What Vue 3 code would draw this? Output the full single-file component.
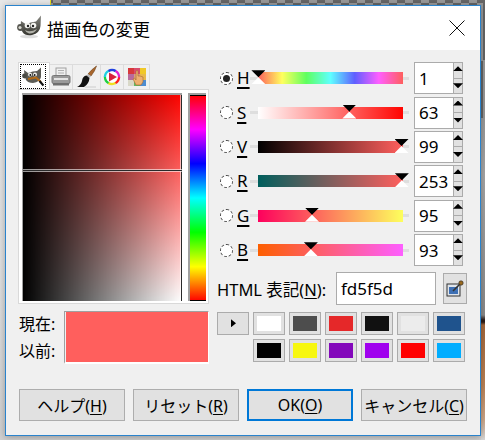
<script setup>
const sliders = [
  { key: 'H', value: 1, max: 360, checked: true, bar: '#fd5f5d, #ffff5f, #5fff5f, #5fffff, #5f5fff, #ff5fff, #ff5f5d' },
  { key: 'S', value: 63, max: 100, bar: '#fff, #ff0400' },
  { key: 'V', value: 99, max: 100, bar: '#000, #ff5f5d' },
  { key: 'R', value: 253, max: 255, bar: '#005f5d, #ff5f5d' },
  { key: 'G', value: 95, max: 255, bar: '#fd005d, #fdff5d' },
  { key: 'B', value: 93, max: 255, bar: '#fd5f00, #fd5fff' },
];

const paletteTop = ['#ffffff', '#4d4d4d', '#e52829', '#111111', '#ececec', '#1f538d'];
const paletteBottom = ['#000000', '#f7f70f', '#8307bb', '#a000ee', '#ff0000', '#00adff'];
const wheel = ['#ff2020', '#f0e020', '#20d040', '#20d0e0', '#2040e0', '#e020d0'];
</script>

<template>
  <div class="desktop">
    <div class="bg-checker-top"></div>
    <div class="bg-tick"></div>
    <div class="bg-right"></div>

    <div class="dialog">
      <header class="titlebar">
        <svg class="title-icon" viewBox="0 0 24 24" width="24" height="24">
          <defs>
            <linearGradient id="wilberHead" x1="0" y1="0" x2="0" y2="1">
              <stop offset="0" stop-color="#8a8a84" />
              <stop offset="1" stop-color="#35352f" />
            </linearGradient>
          </defs>
          <ellipse cx="12" cy="21.5" rx="9" ry="1.8" fill="#ddd" />
          <path d="M4 6 L8.5 9 Q14 7 19 6.5 L24 0.5 L23.5 11 Q23 18 15 20 Q8 21 5.5 17 Q3 13 4 6 Z" fill="url(#wilberHead)" />
          <circle cx="3.5" cy="12.5" r="3.4" fill="#55554f" />
          <circle cx="3" cy="12.5" r="1.6" fill="#d8d8d0" />
          <circle cx="10.5" cy="10.5" r="2.8" fill="#f4f4f0" />
          <circle cx="16.5" cy="10.5" r="2.8" fill="#f4f4f0" />
          <circle cx="11" cy="11" r="1.2" fill="#222" />
          <circle cx="16" cy="11" r="1.2" fill="#222" />
          <path d="M8 15 Q13 18 20 14 Q17 19 12 18.5 Q9 18 8 15 Z" fill="#b0b0a8" />
        </svg>
        <span class="title-text">描画色の変更</span>
        <svg class="close-icon" viewBox="0 0 16 16" width="16" height="16">
          <path d="M0.5 0.5 L15.5 15.5 M15.5 0.5 L0.5 15.5" stroke="#111" stroke-width="1" fill="none" />
        </svg>
      </header>

      <div class="content">
        <div class="top-area">
          <div class="left-col">
            <div class="tabs">
              <div class="tab active">
                <div class="focus-box">
                  <svg viewBox="0 0 22 20" width="22" height="20">
                    <path d="M2 3 L6 6 Q11 4 15 4 L19 0.5 L19 10 Q18 15 11 16 Q6 16 4 13 Q2 9 2 3 Z" fill="#5c5c56" />
                    <circle cx="2.5" cy="9" r="2.4" fill="#4a4a44" />
                    <circle cx="8" cy="7.5" r="2" fill="#f0f0ec" />
                    <circle cx="13" cy="7.5" r="2" fill="#f0f0ec" />
                    <circle cx="8.3" cy="8" r="0.9" fill="#111" />
                    <circle cx="12.7" cy="8" r="0.9" fill="#111" />
                    <path d="M6 12 L14 10.5 L19 15" stroke="#b46a14" stroke-width="2" fill="none" />
                    <path d="M17.5 14 L21.5 18.5" stroke="#111" stroke-width="2.2" />
                  </svg>
                </div>
              </div>
              <div class="tab w23">
                <svg viewBox="0 0 20 20" width="20" height="20">
                  <rect x="5" y="1" width="10" height="8" fill="#f0f0f0" stroke="#a0a0a0" />
                  <path d="M7 3.5 H13 M7 6 H13" stroke="#b0b0b0" />
                  <rect x="1" y="8.5" width="18" height="8" rx="1.5" fill="#9a9a9a" stroke="#777" />
                  <rect x="3" y="11" width="14" height="2" fill="#e4e4e4" />
                  <rect x="2" y="16" width="16" height="2.5" fill="#6f6f6f" />
                </svg>
              </div>
              <div class="tab w28">
                <svg viewBox="0 0 22 24" width="22" height="24">
                  <path d="M20.5 1 Q19 6 15 11 L12 9 Q16 4 20.5 1 Z" fill="#a8662c" stroke="#6d3f17" stroke-width="0.6" />
                  <path d="M15 11 L12 9 L10.5 10.5 L13.5 13 Z" fill="#b8b8b8" />
                  <path d="M10.5 10.5 Q6.5 11 6 16 Q5 20 1 22 L8 22 Q13 19 13.5 13 Z" fill="#111" />
                  <path d="M9 22 L20 22" stroke="#ccc" stroke-width="1" />
                </svg>
              </div>
              <div class="tab w23">
                <svg viewBox="0 0 18 18" width="18" height="18">
                  <circle
                    v-for="(c, i) in wheel"
                    :key="c"
                    cx="9" cy="9" r="7"
                    fill="none"
                    :stroke="c"
                    stroke-width="2.4"
                    pathLength="60"
                    stroke-dasharray="10.5 49.5"
                    :stroke-dashoffset="-i * 10"
                  />
                  <circle cx="9" cy="9" r="5.6" fill="#fff" />
                  <path d="M6 4.5 L14 9 L6 13.5 Z" fill="#d8203c" />
                </svg>
              </div>
              <div class="tab w26">
                <svg viewBox="0 0 20 20" width="20" height="20">
                  <rect x="1" y="1" width="6" height="6" fill="#d8383c" />
                  <rect x="7" y="1" width="6" height="6" fill="#d84c6c" />
                  <rect x="13" y="1" width="6" height="6" fill="#f0c828" />
                  <rect x="1" y="7" width="6" height="6" fill="#b86a9c" />
                  <rect x="7" y="7" width="6" height="6" fill="#d8a078" />
                  <rect x="13" y="7" width="6" height="6" fill="#e8b84c" />
                  <rect x="1" y="13" width="6" height="6" fill="#d8d8c8" />
                  <rect x="7" y="13" width="6" height="6" fill="#60b860" />
                  <rect x="13" y="13" width="6" height="6" fill="#4c8cd0" />
                  <path d="M9 4 Q10 3 11 4 L11 9 L13 9 L16 10 L16 15 L14 18 L9 18 L6 12 L7.5 11 L9 13 Z" fill="#eeb070" stroke="#a86a30" stroke-width="0.6" />
                </svg>
              </div>
            </div>

            <div class="picker-panel">
              <div class="sv-square">
                <div class="sv-line-v"></div>
                <div class="sv-line-h"></div>
              </div>
              <div class="hue-strip"></div>
            </div>

            <div class="preview-row">
              <div class="preview-labels">
                <span>現在:</span>
                <span>以前:</span>
              </div>
              <div class="preview-frame">
                <div class="preview-color"></div>
              </div>
            </div>
          </div>

          <div class="right-col">
            <div class="slider-rows">
              <div v-for="s in sliders" :key="s.key" class="slider-row">
                <span class="radio" :class="{ checked: s.checked }"></span>
                <span class="slider-label"><u>{{ s.key }}</u></span>
                <div class="slider">
                  <div class="slider-bar" :style="{ background: `linear-gradient(to right, ${s.bar})` }">
                    <span class="thumb" :style="{ left: (s.value / s.max) * 100 + '%' }"></span>
                  </div>
                </div>
                <div class="spin-value">{{ s.value }}</div>
                <div class="spin-btns">
                  <span class="spin-btn up"></span>
                  <span class="spin-btn down"></span>
                </div>
              </div>
            </div>

            <div class="html-row">
              <span class="html-label">HTML 表記(<u>N</u>):</span>
              <div class="html-input">fd5f5d</div>
              <div class="pick-btn">
                <svg viewBox="0 0 18 18" width="18" height="18">
                  <rect x="1" y="4" width="13" height="12" fill="#dfe4ea" stroke="#333" />
                  <rect x="3" y="7" width="9" height="7" fill="#3d6fb4" />
                  <path d="M7 11 L14 4" stroke="#333" stroke-width="1.6" />
                  <circle cx="15" cy="3" r="2.2" fill="#9a6a20" stroke="#222" stroke-width="0.6" />
                </svg>
              </div>
            </div>

            <div class="palette">
              <div class="palette-arrow"></div>
              <div v-for="c in paletteTop" :key="c" class="swatch"><span :style="{ background: c }"></span></div>
              <div class="palette-gap"></div>
              <div v-for="c in paletteBottom" :key="c" class="swatch"><span :style="{ background: c }"></span></div>
            </div>
          </div>
        </div>

        <div class="actions">
          <button class="btn">ヘルプ(<u>H</u>)</button>
          <button class="btn">リセット(<u>R</u>)</button>
          <button class="btn primary">OK(<u>O</u>)</button>
          <button class="btn">キャンセル(<u>C</u>)</button>
        </div>
      </div>
    </div>
  </div>
</template>

<style>
html, body {
  margin: 0;
  background: #e2e2e2;
}
</style>

<style scoped>
* {
  box-sizing: border-box;
}

.desktop {
  position: relative;
  width: 485px;
  height: 440px;
  padding: 5px 4px 4px 5px;
  overflow: hidden;
  background: linear-gradient(to bottom, #e8e8e8, #e0e0e0 60%, #d0d0d0);
  font-family: "Noto Sans", "Noto Sans CJK JP", sans-serif;
  font-size: 16px;
  color: #000;
}

/* what shows behind the window */
.bg-checker-top {
  position: absolute;
  left: 51px;
  top: 0;
  right: 0;
  height: 5px;
  background: repeating-conic-gradient(#666 0 25%, #999 0 50%) 2px -5px / 16px 16px;
}

.bg-tick {
  position: absolute;
  left: 50px;
  top: 0;
  width: 1px;
  height: 5px;
  background: #e8e020;
}

.bg-right {
  position: absolute;
  left: 481px;
  top: 0;
  width: 4px;
  height: 440px;
  background:
    linear-gradient(#666, #888) 0 0 / 4px 0 no-repeat,
    repeating-conic-gradient(#666 0 25%, #999 0 50%) 0 3px / 16px 16px no-repeat,
    linear-gradient(to bottom,
      #3a2a28 0, #9a9a9a 2px, #a8a8a8 60px, #8c8c8c 200px,
      #2c1c18 205px, #2c1c18 207px, #a5683c 210px, #bd8458 270px, #cfa98c 305px, #d8d8d8 325px);
  background-size: 4px 0, 4px 115px, 4px 325px;
  background-position: 0 0, 0 3px, 0 115px;
  background-repeat: no-repeat;
}

.dialog {
  position: relative;
  display: flex;
  flex-direction: column;
  width: 476px;
  height: 431px;
  border: 1px solid #2a83cc;
  background: #f0f0f0;
  box-shadow: 0 1px 7px rgba(0, 0, 0, 0.3);
}

.titlebar {
  display: flex;
  align-items: center;
  height: 44px;
  padding: 0 15px 0 11px;
  background: #fff;
}

.title-icon {
  margin-top: -2px;
}

.title-text {
  margin-left: 6px;
  font-size: 17px;
  letter-spacing: 0.2px;
}

.close-icon {
  margin-left: auto;
}

.content {
  display: flex;
  flex-direction: column;
  padding: 12px 13px 0 12px;
}

.top-area {
  display: flex;
  gap: 8px;
}

.left-col {
  width: 191px;
}

.tabs {
  display: flex;
  align-items: flex-end;
  height: 27px;
}

.tab {
  display: flex;
  align-items: center;
  justify-content: center;
  height: 25px;
  border: 1px solid #dcdcdc;
  border-bottom: none;
  border-left: none;
  background: #f0f0f0;
}

.tab.active {
  width: 32px;
  height: 27px;
  border: 1px solid #d9d9d9;
  border-bottom: none;
  background: #fff;
  padding: 1px 3px 0 1px;
}

.focus-box {
  display: flex;
  align-items: center;
  justify-content: center;
  width: 100%;
  height: 100%;
  border: 1px dotted #000;
}

.w23 { width: 23px; }
.w28 { width: 28px; }
.w26 { width: 26px; }

.picker-panel {
  display: flex;
  gap: 6px;
  height: 215px;
  padding: 3px 2px 3px 3px;
  border: 1px solid #d9d9d9;
  background: #fff;
}

.sv-square {
  position: relative;
  width: 162px;
  height: 208px;
  border-top: 2px solid #a0a0a0;
  border-left: 1px solid #a0a0a0;
  background:
    linear-gradient(to right, #000, transparent),
    linear-gradient(to bottom, #ff0400, #fff);
}

.sv-line-v {
  position: absolute;
  left: 157px;
  top: 0;
  bottom: 0;
  width: 3px;
  border-left: 1px solid rgba(255, 255, 255, 0.6);
  border-right: 1px solid rgba(255, 255, 255, 0.6);
  background: #2a2a2a;
  background-clip: content-box;
}

.sv-line-h {
  position: absolute;
  left: 0;
  right: 0;
  top: 74px;
  height: 3px;
  border-top: 1px solid rgba(255, 255, 255, 0.6);
  border-bottom: 1px solid rgba(255, 255, 255, 0.6);
  background: #2a2a2a;
  background-clip: content-box;
}

.hue-strip {
  width: 18px;
  height: 208px;
  border-top: 2px solid #a0a0a0;
  border-left: 2px solid #a0a0a0;
  background:
    linear-gradient(#000, #000) 0 0 / 100% 1px no-repeat,
    linear-gradient(#000, #000) 0 100% / 100% 1px no-repeat,
    linear-gradient(to bottom, #ff0000, #ff00ff, #0000ff, #00ffff, #00ff00, #ffff00, #ff0000);
}

.preview-row {
  display: flex;
  margin-top: 7px;
}

.preview-labels {
  display: flex;
  flex-direction: column;
  justify-content: space-between;
  width: 46px;
  height: 53px;
  padding-left: 1px;
  font-size: 16px;
  line-height: 26px;
}

.preview-frame {
  flex: 1;
  height: 53px;
  border-top: 1px solid #a0a0a0;
  border-left: 1px solid #a0a0a0;
  border-right: 1px solid #fff;
  border-bottom: 2px solid #fff;
  padding-left: 1px;
}

.preview-color {
  height: 100%;
  background: #ff5f5d;
}

.right-col {
  width: 250px;
}

.slider-rows {
  display: grid;
  grid-auto-rows: 32.4px;
  row-gap: 2px;
}

.slider-row {
  display: grid;
  grid-template-columns: 13px 17px 159px 39px 10px;
  column-gap: 0;
  align-items: center;
  padding-left: 3px;
}

.radio {
  position: relative;
  width: 13px;
  height: 13px;
  border: 1px dashed #444;
  border-radius: 50%;
  background: #fff;
}

.radio.checked::after {
  content: "";
  position: absolute;
  left: 2px;
  top: 2px;
  width: 7px;
  height: 7px;
  border-radius: 50%;
  background: #222;
}

.slider-label {
  padding-left: 4px;
  font-size: 17px;
  line-height: 20px;
}

.slider-label u {
  text-decoration-thickness: 2px;
  text-underline-offset: 3px;
}

.slider {
  position: relative;
  padding: 0 6px 0 8px;
  margin-right: 5px;
  width: 159px;
  background: linear-gradient(#dedede, #dedede) 0 50% / 100% 3px no-repeat;
}

.slider-bar {
  position: relative;
  height: 12px;
}

/* black and white triangles meeting at the value */
.thumb {
  position: absolute;
  top: -2px;
  width: 14px;
  height: 14px;
  margin-left: -7px;
  background:
    linear-gradient(#000, #000) 0 0 / 14px 7px no-repeat,
    linear-gradient(#fff, #fff) 0 100% / 14px 7px no-repeat;
  clip-path: polygon(0 0, 100% 0, 50% 50%, 100% 100%, 0 100%, 50% 50%);
}

.spin-value {
  display: flex;
  align-items: center;
  height: 32px;
  margin-left: 5px;
  width: 39px;
  padding-left: 4px;
  border: 1px solid #ababab;
  border-right: none;
  background: #fff;
  font-size: 17px;
}

.spin-btns {
  display: flex;
  flex-direction: column;
  height: 32px;
  width: 10px;
  margin-left: 5px;
}

.spin-btn {
  position: relative;
  flex: 1;
  border: 1px solid #ababab;
  background: #e1e1e1;
}

.spin-btn + .spin-btn {
  border-top: none;
}

.spin-btn::after {
  content: "";
  position: absolute;
  left: -1px;
  width: 10px;
  height: 5px;
  background: #000;
}

.spin-btn.up::after {
  top: 3px;
  clip-path: polygon(50% 0, 100% 100%, 0 100%);
}

.spin-btn.down::after {
  bottom: 5px;
  clip-path: polygon(0 0, 100% 0, 50% 100%);
}

.html-row {
  display: flex;
  align-items: center;
  height: 33px;
  margin-top: 6px;
}

.html-label {
  width: 119px;
  font-size: 16.5px;
  white-space: nowrap;
}

.html-label u,
.btn u {
  text-underline-offset: 2px;
}

.html-input {
  display: flex;
  align-items: center;
  width: 100px;
  height: 33px;
  padding-left: 4px;
  border: 1px solid #ababab;
  background: #fff;
  font-size: 17px;
}

.pick-btn {
  display: flex;
  align-items: center;
  justify-content: center;
  width: 24px;
  height: 31px;
  margin-left: 7px;
  border: 1px solid #ababab;
  background: #e1e1e1;
}

.palette {
  display: grid;
  grid-template-columns: 32px repeat(6, 32px);
  grid-auto-rows: 22.5px;
  column-gap: 4px;
  row-gap: 4.5px;
  margin-top: 7px;
  margin-left: 0;
  width: 250px;
  column-gap: 4px;
}

.palette-arrow {
  position: relative;
  width: 32px;
  border: 1px solid #ababab;
  background: #e1e1e1;
}

.palette-arrow::after {
  content: "";
  position: absolute;
  left: 13px;
  top: 6px;
  width: 5px;
  height: 8px;
  background: #000;
  clip-path: polygon(0 0, 100% 50%, 0 100%);
}

.swatch {
  display: flex;
  padding: 3px;
  border: 1px solid #ababab;
  background: #e1e1e1;
}

.swatch span {
  flex: 1;
}

.actions {
  display: flex;
  gap: 8px;
  margin-top: 25px;
  padding-left: 1px;
}

.btn {
  width: 106px;
  height: 32px;
  padding: 0;
  border: 1px solid #adadad;
  background: #e1e1e1;
  font-family: inherit;
  font-size: 16px;
  color: #000;
}

.btn.primary {
  border: 2px solid #0078d7;
}
</style>
